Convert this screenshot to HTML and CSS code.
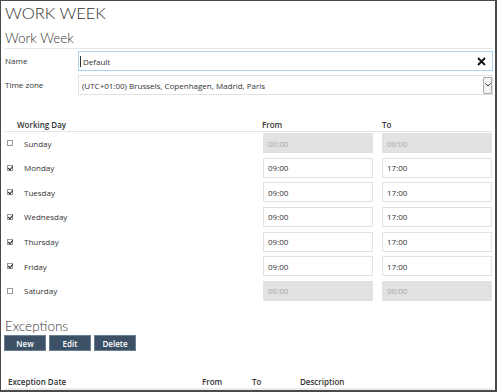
FILE: index.html
```html
<!DOCTYPE html>
<html lang="en">

<head>
    <meta charset="UTF-8">
    <title>Work Week</title>
    <link rel="stylesheet" href="styles.css">
</head>

<body>
    <div class="page">
        <h1>WORK WEEK</h1>
        <h2 class="section-title">Work Week</h2>

        <div class="form-row">
            <label for="name">Name</label>
            <div class="field focused">
                <input type="text" id="name" value="Default">
                <svg class="clear" width="9" height="9" viewBox="0 0 9 9">
                    <path d="M1 1 L8 8 M8 1 L1 8" stroke="#111" stroke-width="1.8" />
                </svg>
            </div>
        </div>

        <div class="form-row">
            <label for="tz">Time zone</label>
            <div class="field">
                <span class="select-text" id="tz">(UTC+01:00) Brussels, Copenhagen, Madrid, Paris</span>
                <span class="select-arrow">
                    <svg width="6" height="4" viewBox="0 0 6 4">
                        <path d="M0.5 0.5 L3 3 L5.5 0.5" stroke="#333" stroke-width="1" fill="none" />
                    </svg>
                </span>
            </div>
        </div>

        <div class="days">
            <div class="days-head">
                <span class="col-day">Working Day</span>
                <span class="col-time">From</span>
                <span class="col-time">To</span>
            </div>

            <div class="day-row">
                <span class="check"></span>
                <span class="day">Sunday</span>
                <input class="time" type="text" value="00:00" disabled>
                <input class="time" type="text" value="00:00" disabled>
            </div>
            <div class="day-row">
                <span class="check on"></span>
                <span class="day">Monday</span>
                <input class="time" type="text" value="09:00">
                <input class="time" type="text" value="17:00">
            </div>
            <div class="day-row">
                <span class="check on"></span>
                <span class="day">Tuesday</span>
                <input class="time" type="text" value="09:00">
                <input class="time" type="text" value="17:00">
            </div>
            <div class="day-row">
                <span class="check on"></span>
                <span class="day">Wednesday</span>
                <input class="time" type="text" value="09:00">
                <input class="time" type="text" value="17:00">
            </div>
            <div class="day-row">
                <span class="check on"></span>
                <span class="day">Thursday</span>
                <input class="time" type="text" value="09:00">
                <input class="time" type="text" value="17:00">
            </div>
            <div class="day-row">
                <span class="check on"></span>
                <span class="day">Friday</span>
                <input class="time" type="text" value="09:00">
                <input class="time" type="text" value="17:00">
            </div>
            <div class="day-row">
                <span class="check"></span>
                <span class="day">Saturday</span>
                <input class="time" type="text" value="00:00" disabled>
                <input class="time" type="text" value="00:00" disabled>
            </div>
        </div>

        <h2 class="exceptions-title">Exceptions</h2>
        <div class="button-group">
            <button>New</button>
            <button>Edit</button>
            <button>Delete</button>
        </div>

        <div class="exc-head">
            <span class="exc-date">Exception Date</span>
            <span class="exc-from">From</span>
            <span class="exc-to">To</span>
            <span>Description</span>
        </div>
    </div>
</body>

</html>
```

FILE: styles.css
```css
body {
    margin: 0;
    font-family: 'Open Sans', 'Segoe UI', sans-serif;
    font-size: 8px;
    color: #333;
    background: white;
}

.page {
    box-sizing: border-box;
    width: 497px;
    height: 392px;
    overflow: hidden;
    border-style: solid;
    border-color: #4a4a4a;
    border-width: 1px 2px 2px 1px;
    padding: 0 2px 0 4px;
}

h1 {
    font-family: 'Lato', sans-serif;
    font-weight: 300;
    font-size: 16.5px;
    margin: 2px 0 0 0;
    line-height: 20px;
    color: #333;
}

.section-title {
    font-family: 'Lato', sans-serif;
    font-weight: 300;
    font-size: 13.5px;
    margin: 6px 0 0 0;
    line-height: 18px;
    padding-bottom: 1px;
    border-bottom: 1px solid #e6e6e6;
}

.form-row {
    display: flex;
    align-items: center;
    margin-top: 2px;
}

.form-row + .form-row {
    margin-top: 4px;
}

.form-row label {
    width: 73px;
    margin-top: -2px;
}

.field {
    position: relative;
    flex: 1;
    display: flex;
    align-items: center;
    height: 20px;
    box-sizing: border-box;
    border: 1px solid #e2e2e2;
}

.field.focused {
    border-color: #a9d3f3;
}

.field input {
    flex: 1;
    border: none;
    outline: none;
    font-family: inherit;
    font-size: 8px;
    color: #333;
    padding: 0 0 0 2px;
    border-left: 1px solid #333;
    margin-left: 1px;
    height: 11px;
}

.clear {
    margin-right: 6px;
}

.select-text {
    flex: 1;
    padding-left: 3px;
}

.select-arrow {
    display: flex;
    align-items: center;
    justify-content: center;
    width: 9px;
    height: 17px;
    border: 1px solid #aaa;
    border-radius: 1px;
    background: #f4f4f4;
    box-sizing: border-box;
}

.days {
    margin-top: 25px;
}

.days-head {
    display: flex;
    font-weight: 600;
    padding-bottom: 1px;
    border-bottom: 1px solid #e4e4e4;
    margin-bottom: 1px;
    line-height: 10px;
}

.col-day {
    width: 245px;
    padding-left: 12px;
    flex-shrink: 0;
}

.col-time {
    width: 120px;
    flex-shrink: 0;
}

.day-row {
    display: flex;
    align-items: center;
    height: 20px;
    margin-bottom: 4.67px;
}

.check {
    box-sizing: border-box;
    flex-shrink: 0;
    width: 6px;
    height: 6px;
    border: 1px solid #999;
    margin: 0 11px 0 2px;
    position: relative;
}

.check.on::after {
    content: "";
    position: absolute;
    left: 0.5px;
    top: -1px;
    width: 2px;
    height: 4px;
    border: solid #222;
    border-width: 0 1.2px 1.2px 0;
    transform: rotate(40deg);
}

.day {
    width: 239px;
    flex-shrink: 0;
}

.time {
    box-sizing: border-box;
    flex-shrink: 0;
    width: 110px;
    height: 20px;
    border: 1px solid #e2e2e2;
    font-family: inherit;
    font-size: 8px;
    color: #333;
    padding: 0 4px;
    margin-right: 9px;
    background: white;
}

.time:last-child {
    margin-right: 0;
}

.time:disabled {
    background: #e2e2e2;
    color: #a8a8a8;
}

.exceptions-title {
    font-family: 'Lato', sans-serif;
    font-weight: 300;
    font-size: 13.5px;
    margin: 16.33px 0 0 0;
    line-height: 18px;
}

.button-group {
    display: flex;
    gap: 3px;
    margin-left: -1px;
}

button {
    width: 42px;
    height: 16px;
    background-color: #3c5166;
    color: white;
    border: 1px solid #6c7f91;
    font-family: inherit;
    font-weight: 600;
    font-size: 8px;
    padding: 0;
}

.exc-head {
    display: flex;
    font-weight: 600;
    margin-top: 26px;
    padding: 0 0 1px 3px;
    border-bottom: 2px solid #ececec;
    line-height: 10px;
}

.exc-date {
    width: 194px;
}

.exc-from {
    width: 50px;
}

.exc-to {
    width: 48px;
}
```
